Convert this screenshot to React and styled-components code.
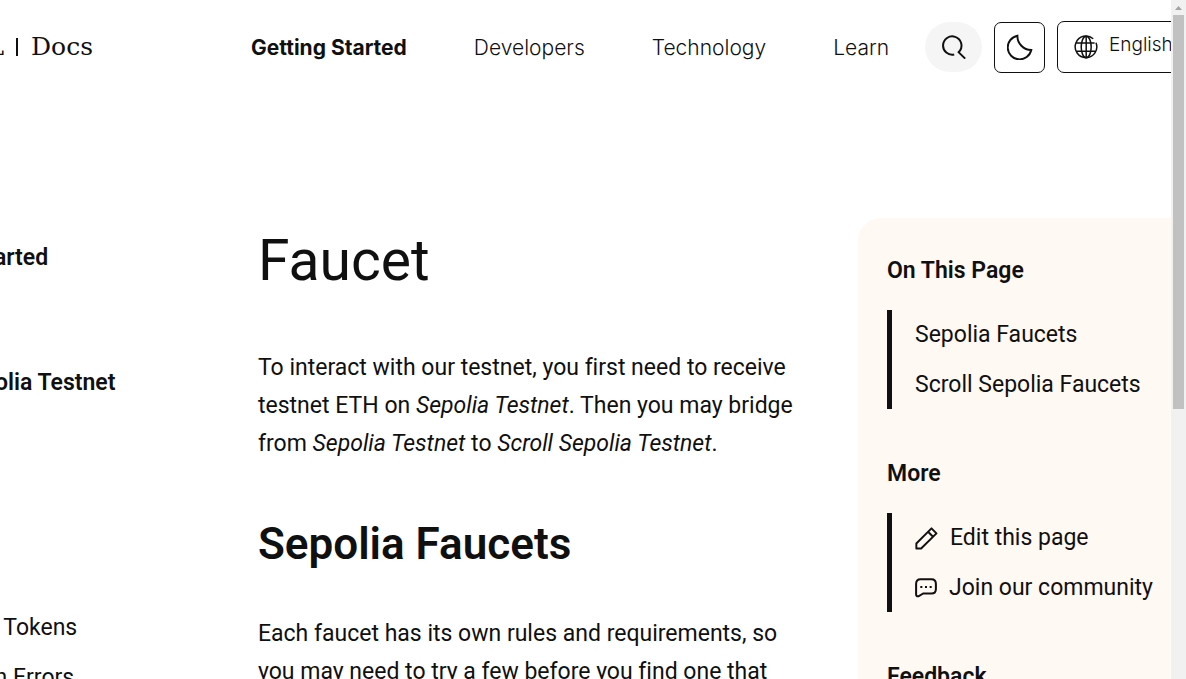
import React from "react";
import styled, { createGlobalStyle } from "styled-components";

const ink = "#101010";
const body = `Roboto, "Liberation Sans", sans-serif`;
const display = `Inter, "Liberation Sans", sans-serif`;

const GlobalStyle = createGlobalStyle`
  * { box-sizing: border-box; }
  body {
    margin: 0;
    background: #fff;
    color: ${ink};
    font: 400 23px/38px ${body};
    font-variant-ligatures: none;
    overflow: hidden;
  }
  a { color: inherit; text-decoration: none; }
  h1, h2, h3, p, ul { margin: 0; padding: 0; }
  ul { list-style: none; }
`;

const Window = styled.div`
  display: flex;
  height: 100vh;
  overflow: hidden;
`;

const Viewport = styled.div`
  flex: 1;
  min-width: 0;
  overflow: hidden;
`;

const Header = styled.header`
  display: flex;
  align-items: center;
  height: 94px;
  white-space: nowrap;
`;

const Brand = styled.a`
  display: flex;
  justify-content: flex-end;
  align-items: center;
  flex: none;
  width: 93px;
  font: 400 25px/32px "DejaVu Serif", serif;
`;

const Divider = styled.span`
  flex: none;
  width: 2px;
  height: 18px;
  margin: 0 13px 0 12px;
  background: ${ink};
`;

const Nav = styled.nav`
  display: flex;
  gap: 67px;
  margin-left: 158px;
  padding-top: 2px;
  font: 400 21px/32px ${display};
`;

const NavLink = styled.a`
  font-weight: ${(p) => (p.$active ? 700 : 300)};
`;

const Tools = styled.div`
  display: flex;
  align-items: center;
  gap: 12px;
  flex: none;
  margin: 0 -40px 0 auto;
`;

const IconButton = styled.button`
  display: grid;
  place-items: center;
  width: ${(p) => (p.$round ? 57 : 51)}px;
  height: ${(p) => (p.$round ? 50 : 51)}px;
  padding: 0;
  color: ${ink};
  border: ${(p) => (p.$round ? "0" : `1px solid ${ink}`)};
  border-radius: ${(p) => (p.$round ? 25 : 7)}px;
  background: ${(p) => (p.$round ? "#f5f5f5" : "#fff")};
`;

const LanguageButton = styled.button`
  display: flex;
  align-items: center;
  gap: 11px;
  width: 154px;
  height: 52px;
  padding: 0 16px;
  color: ${ink};
  border: 1px solid ${ink};
  border-radius: 7px;
  background: #fff;
  font: 300 19px/32px ${display};
`;

const LanguageName = styled.span`
  padding-bottom: 5px;
`;

const Body = styled.div`
  display: grid;
  grid-template-columns: 258px minmax(0, 1fr) 313px;
  padding-top: 124px;
`;

const Sidebar = styled.nav`
  margin-left: -109px;
  padding-top: 21px;
  white-space: nowrap;
`;

const SideTitle = styled.h3`
  font-size: 23px;
  font-weight: 600;
  line-height: 38px;
  margin-bottom: ${(p) => (p.$gap ? 201 : 87)}px;
`;

const SideLink = styled.a`
  display: block;
  padding-left: 22px;
  line-height: 50px;
`;

const Main = styled.main`
  padding-right: 48px;
`;

const Title = styled.h1`
  padding-top: 9px;
  font: 400 57px/68px ${body};
`;

const Subtitle = styled.h2`
  padding: 51px 0 41px;
  font: 600 44px/60px ${body};
`;

const Lead = styled.p`
  padding-top: 54px;
`;

const Panel = styled.aside`
  margin-right: -30px;
  padding: 33px 29px;
  border-radius: 23px;
  background: #fff8f3;
  white-space: nowrap;
`;

const PanelTitle = styled.h3`
  font-size: 23px;
  font-weight: 600;
  line-height: 40px;
`;

const PanelList = styled.ul`
  margin: 19px 0 45px;
  padding-left: 23px;
  border-left: 5px solid ${ink};
`;

const PanelItem = styled.li`
  height: ${(p) => (p.$last ? 49 : 50)}px;
  line-height: 50px;
`;

const PanelLink = styled.a`
  display: flex;
  align-items: center;
  gap: 12px;
`;

const Scrollbar = styled.div`
  flex: 0 0 15px;
  display: flex;
  flex-direction: column;
  align-items: center;
  background: #f1f1f1;
`;

const Arrow = styled.svg`
  display: block;
  flex: none;
  width: 15px;
  height: 15px;
`;

const Thumb = styled.div`
  width: 11px;
  height: 58%;
  background: #c1c1c1;
`;

const Icon = ({ size = 24, width = 2, children }) => (
  <svg width={size} height={size} viewBox="0 0 24 24" fill="none" stroke="currentColor" strokeWidth={width} aria-hidden="true">
    {children}
  </svg>
);

const links = [
  ["Getting Started", true],
  ["Developers"],
  ["Technology"],
  ["Learn"],
];

export default function App() {
  return (
    <Window>
      <GlobalStyle />
      <Viewport>
        <Header>
          <Brand href="#">
            L<Divider />Docs
          </Brand>
          <Nav aria-label="Main">
            {links.map(([label, active]) => (
              <NavLink key={label} href="#" $active={active}>{label}</NavLink>
            ))}
          </Nav>
          <Tools>
            <IconButton $round aria-label="Search">
              <Icon>
                <path d="M12.2 19.6A9.2 9.2 0 1 1 18 15.6L16.4 17.2" />
                <path d="M16 16.6L23.2 23.6" />
              </Icon>
            </IconButton>
            <IconButton aria-label="Dark mode">
              <Icon size={26} width={1.8}>
                <path d="M9.6 1.6A11 11 0 1 0 22.4 14.8A13 13 0 0 1 9.6 1.6Z" />
              </Icon>
            </IconButton>
            <LanguageButton>
              <Icon size={24} width={1.5}>
                <path d="M19.2 3.8A10.8 10.8 0 1 0 22 7.8M2 8H20.6M2 16.2H22M12.2 1.4V22.6" />
                <ellipse cx="12.2" cy="12" rx="5" ry="10.8" />
              </Icon>
              <LanguageName>English</LanguageName>
            </LanguageButton>
          </Tools>
        </Header>
        <Body>
          <Sidebar aria-label="Section">
            <SideTitle>Getting Started</SideTitle>
            <SideTitle $gap>Scroll Sepolia Testnet</SideTitle>
            <SideLink href="#">Transfer Tokens</SideLink>
            <SideLink href="#">Common Errors</SideLink>
          </Sidebar>
          <Main>
            <Title>Faucet</Title>
            <Lead>
              To interact with our testnet, you first need to receive testnet ETH on <em>Sepolia Testnet</em>. Then
              you may bridge from <em>Sepolia Testnet</em> to <em>Scroll Sepolia Testnet</em>.
            </Lead>
            <Subtitle>Sepolia Faucets</Subtitle>
            <p>Each faucet has its own rules and requirements, so you may need to try a few before you find one that</p>
          </Main>
          <Panel>
            <PanelTitle>On This Page</PanelTitle>
            <PanelList>
              <PanelItem><PanelLink href="#">Sepolia Faucets</PanelLink></PanelItem>
              <PanelItem $last><PanelLink href="#">Scroll Sepolia Faucets</PanelLink></PanelItem>
            </PanelList>
            <PanelTitle>More</PanelTitle>
            <PanelList>
              <PanelItem>
                <PanelLink href="#">
                  <Icon size={23}>
                    <path d="M1.4 22.4V17.2L17.2 1.4L22.4 6.6L6.4 22.4ZM13.6 5L18.8 10.2" strokeLinejoin="round" />
                  </Icon>
                  Edit this page
                </PanelLink>
              </PanelItem>
              <PanelItem $last>
                <PanelLink href="#">
                  <Icon size={22} width={2.2}>
                    <path d="M6 2.5H18Q22.8 2.5 22.8 7.5V13Q22.8 18 18 18H9L3.8 21Q1.2 21.6 1.2 18.8V7.5Q1.2 2.5 6 2.5Z" />
                    <path d="M5.8 10.8H8M10.9 10.8H13.1M16 10.8H18.2" />
                  </Icon>
                  Join our community
                </PanelLink>
              </PanelItem>
            </PanelList>
            <PanelTitle>Feedback</PanelTitle>
          </Panel>
        </Body>
      </Viewport>
      <Scrollbar aria-hidden="true">
        <Arrow viewBox="0 0 15 15"><path d="M4 10L7.5 6L11 10Z" fill="#a3a3a3" /></Arrow>
        <Thumb />
      </Scrollbar>
    </Window>
  );
}
